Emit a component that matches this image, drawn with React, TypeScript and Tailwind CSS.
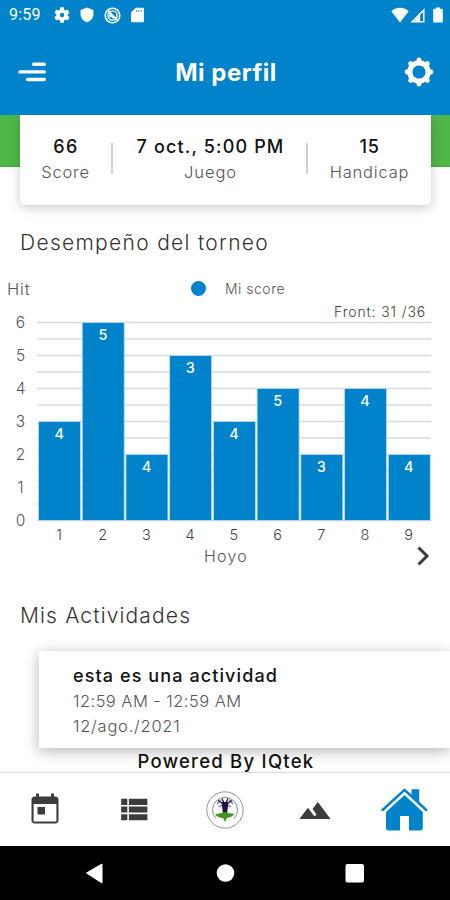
import React from 'react'

const holes = [
  { hole: 1, level: 3, hits: 4 },
  { hole: 2, level: 6, hits: 5 },
  { hole: 3, level: 2, hits: 4 },
  { hole: 4, level: 5, hits: 3 },
  { hole: 5, level: 3, hits: 4 },
  { hole: 6, level: 4, hits: 5 },
  { hole: 7, level: 2, hits: 3 },
  { hole: 8, level: 4, hits: 4 },
  { hole: 9, level: 2, hits: 4 },
]

const StatusBar = () => {
  return (
    <div className="h-[30px] flex items-center justify-between pl-[9px] pr-[7px]">
      <div className="flex items-center">
        <span className="font-['Roboto'] text-[16px] tracking-[0.2px] w-[45px]">9:59</span>
        {/* gear */}
        <svg className="w-4 h-4 mr-[10px]" viewBox="2 2 20 20" fill="currentColor">
          <path d="M19.14 12.94c.04-.3.06-.61.06-.94 0-.32-.02-.64-.07-.94l2.03-1.58a.49.49 0 0 0 .12-.61l-1.92-3.32a.49.49 0 0 0-.59-.22l-2.39.96c-.5-.38-1.03-.7-1.62-.94l-.36-2.54a.48.48 0 0 0-.48-.41h-3.84c-.24 0-.43.17-.47.41l-.36 2.54c-.59.24-1.13.57-1.62.94l-2.39-.96a.48.48 0 0 0-.59.22L2.74 8.87c-.12.21-.08.47.12.61l2.03 1.58c-.05.3-.09.63-.09.94s.02.64.07.94l-2.03 1.58a.49.49 0 0 0-.12.61l1.92 3.32c.12.22.37.29.59.22l2.39-.96c.5.38 1.03.7 1.62.94l.36 2.54c.05.24.24.41.48.41h3.84c.24 0 .44-.17.47-.41l.36-2.54c.59-.24 1.13-.56 1.62-.94l2.39.96c.22.08.47 0 .59-.22l1.92-3.32c.12-.22.07-.47-.12-.61l-2.01-1.58zM12 14.8a2.8 2.8 0 1 1 0-5.6 2.8 2.8 0 0 1 0 5.6z" />
        </svg>
        {/* shield */}
        <svg className="w-[14px] h-4 mr-[10px]" viewBox="0 0 14 16" fill="currentColor">
          <path d="M7 .5L.6 3v4.500c0 3.600 2.700 6.800 6.400 7.700 3.700-.9 6.400-4.100 6.400-7.700V3L7 .5z" />
        </svg>
        {/* crossed circle */}
        <svg className="w-[17px] h-[17px] mr-[10px]" viewBox="0 0 17 17" fill="none" stroke="currentColor">
          <circle cx="8.500" cy="8.500" r="7.300" strokeWidth="1.600" />
          <circle cx="8.500" cy="8.500" r="4.600" strokeWidth="1.300" />
          <path d="M4 3.500L13.500 13M6 10.500V7.500l4 4" strokeWidth="1.500" />
        </svg>
        {/* sd card */}
        <svg className="w-[13px] h-4" viewBox="0 0 13 16" fill="currentColor">
          <path fillRule="evenodd" d="M5 .8h6.600c.8 0 1.300.5 1.300 1.200v12c0 .8-.5 1.300-1.300 1.300H1.400C.6 15.300.1 14.800.1 14V5.200L5 .8zM5.200 3v2h.8V3h-.8zm2.300 0v2h.8V3h-.8zm2.300 0v2h.8V3h-.8z" />
        </svg>
      </div>
      <div className="flex items-center">
        {/* wifi */}
        <svg className="w-[18px] h-[16px]" viewBox="0 0 18 16" fill="currentColor">
          <path d="M9 15.500L.3 4.300C2.500 2 5.500.8 9 .8s6.500 1.200 8.700 3.500L9 15.500z" />
        </svg>
        {/* signal */}
        <svg className="w-[15px] h-[15px] ml-[1px] mr-[8px]" viewBox="0 0 15 15" fill="currentColor">
          <path fillRule="evenodd" d="M14.500.3v14.200H.3L14.500.3zM13 4v9h-2.800V6.800L13 4zM8.800 8.200V13H4l4.800-4.800z" />
          <path d="M5 12l4-4v5H5z" />
        </svg>
        {/* battery */}
        <svg className="w-[10px] h-4" viewBox="0 0 10 16" fill="currentColor">
          <path d="M3 .5h4v1.300h1.500c.8 0 1.300.5 1.300 1.200v11.500c0 .6-.4 1-1 1H1.200c-.6 0-1-.4-1-1V3c0-.7.5-1.200 1.300-1.200H3V.5z" />
        </svg>
      </div>
    </div>
  )
}

const Header = () => {
  return (
    <div className="h-[85px] flex items-center justify-between pl-[18px] pr-[16px]">
      <svg className="w-7 h-5 -mt-[2px]" viewBox="0 0 28 20" fill="none" stroke="currentColor" strokeWidth="3.400" strokeLinecap="round">
        <path d="M15.700 2.200H26.300M1.900 9.900H26.300M9.500 17.500H26.300" />
      </svg>
      <h1 className="text-[24px] leading-[26px] font-bold tracking-[0.5px] pl-[2px]">Mi perfil</h1>
      <svg className="w-[30px] h-[30px] -mt-[2px]" viewBox="-15 -15 30 30" fill="none" stroke="currentColor">
        <circle r="9.200" strokeWidth="5.200" />
        <path
          d="M0-11V-12M0 11V12M-11 0H-12M11 0H12M7.800-7.800l.6-.6M-7.800-7.800l-.6-.6M7.800 7.800l.6.6M-7.800 7.800l-.6.6"
          strokeWidth="4.800"
          strokeLinecap="round"
        />
      </svg>
    </div>
  )
}

const ScoreCard = () => {
  return (
    <div className="bg-linear-to-b from-[#4fb748] from-[51px] via-[#1fa52a] via-[52px] to-transparent to-[52px] px-5">
      <div className="h-[90px] w-[411px] bg-white rounded-b-[5px] shadow-[0_3px_12px_rgba(0,0,0,0.2)] flex pt-5 text-center">
        <div className="w-[91px]">
          <p className="text-[18px] leading-[23px] font-medium tracking-[1.4px] pl-[1px] text-[#111]">66</p>
          <p className="text-[16.5px] leading-[28px] font-light tracking-[0.8px] text-[#555]">Score</p>
        </div>
        <div className="w-[2px] h-[31px] mt-2 bg-[#d0d0d0]" />
        <div className="w-[193px] pl-[2px]">
          <p className="text-[18px] leading-[23px] font-medium tracking-[1.15px] text-[#111]">7 oct., 5:00 PM</p>
          <p className="text-[16.5px] leading-[28px] font-light tracking-[0.9px] text-[#555]">Juego</p>
        </div>
        <div className="w-[2px] h-[31px] mt-2 bg-[#d0d0d0]" />
        <div className="w-[123px]">
          <p className="text-[18px] leading-[23px] font-medium tracking-[0.6px] text-[#111]">15</p>
          <p className="text-[16.5px] leading-[28px] font-light tracking-[0.8px] text-[#555]">Handicap</p>
        </div>
      </div>
    </div>
  )
}

const ScoreChart = () => {
  return (
    <div>
      {/* legend */}
      <div className="h-5 -mt-[1px] flex items-center pl-[7px] text-[#555] font-light">
        <span className="w-[184px] pt-[3px] text-[16.5px] tracking-[0.9px]">Hit</span>
        <span className="w-[15px] h-[15px] rounded-full bg-[#0083ca]" />
        <span className="pl-[19px] text-[14px] tracking-[0.5px]">Mi score</span>
      </div>
      <p className="h-[21px] leading-[27px] pr-[24px] text-right text-[14px] font-light tracking-[0.85px] text-[#444]">Front: 31 /36</p>

      {/* bars */}
      <svg className="block w-[450px] h-[226px] overflow-visible" viewBox="0 319 450 226" fontWeight="300">
        {Array.from({ length: 13 }, (_, i) => (
          <path key={i} d={`M37 ${520.5 - i * 16.5}H431`} stroke="#dadada" strokeWidth="1.500" />
        ))}
        {[0, 1, 2, 3, 4, 5, 6].map((n) => (
          <text key={n} x="20.500" y={525.5 - n * 33} fontSize="15.500" textAnchor="middle" fill="#555">{n}</text>
        ))}
        {holes.map((h, i) => (
          <g key={h.hole} textAnchor="middle">
            <rect x={38.5 + i * 43.72} y={520.5 - h.level * 33} width="42" height={h.level * 33} fill="#0083ca" stroke="#bfdcf0" strokeWidth="0.800" />
            <text x={59.2 + i * 43.7} y={538 - h.level * 33} fontSize="14.500" fontWeight="500" fill="#fff">{h.hits}</text>
            <text x={59 + i * 43.7} y="540.300" fontSize="14.500" fill="#444">{h.hole}</text>
          </g>
        ))}
      </svg>

      <div className="h-[24px] flex items-center text-[#555]">
        <span className="w-[412px] pl-[40px] pb-[2px] text-center text-[16px] font-light tracking-[1.2px]">Hoyo</span>
        <svg className="w-[22px] h-[22px] -mt-[2px]" viewBox="0 0 22 22" fill="none" stroke="#3c3c3c" strokeWidth="3">
          <path d="M6.500 2.500L15 11l-8.500 8.500" />
        </svg>
      </div>
    </div>
  )
}

const BottomNav = () => {
  return (
    <div className="h-[74px] bg-white border-t border-[#dcdcdc] flex items-center text-[#3c3c3c] relative">
      <div className="w-[90px] flex justify-center">
        <svg className="w-9 h-9" viewBox="0 0 24 24" fill="currentColor">
          <path d="M19 3h-1V1h-2v2H8V1H6v2H5c-1.110 0-1.990.9-1.990 2L3 19c0 1.100.89 2 2 2h14c1.100 0 2-.9 2-2V5c0-1.100-.9-2-2-2zm1 16.600H4.400V8H19.600v11.600z" />
          <path d="M7 10h5v5H7z" />
        </svg>
      </div>
      <div className="w-[87px] flex justify-center">
        <svg className="w-[37px] h-[37px]" viewBox="0 0 24 24" fill="currentColor">
          <path d="M4 14h4v-4H4v4zm0 5h4v-4H4v4zM4 9h4V5H4v4zm5 5h12v-4H9v4zm0 5h12v-4H9v4zM9 5v4h12V5H9z" />
        </svg>
      </div>
      {/* club logo */}
      <div className="w-[96px] flex justify-center">
        <svg className="w-[38px] h-[38px]" viewBox="-19 -19 38 38">
          <circle r="18.200" fill="#fff" stroke="#777" strokeWidth="0.800" />
          <path d="M-9 8.500A12.500 12.500 0 1 1 9 8.500" fill="none" stroke="#8a8a98" strokeWidth="1" />
          <path d="M-8-6l4-4M8-6l-4-4M-6-3l3-2M6-3l-3-2" stroke="#9c98bb" strokeWidth="2" />
          <path d="M-7-9.500l5 3M7-9.500l-5 3M-3-11.500L-1-7M3-11.500L1-7" stroke="#1b1445" strokeWidth="1.300" />
          <path d="M-3.500-8h7L2 4h-4z" fill="#1b1445" />
          <path d="M-10 4.500C-6 3-3 3.500 0 2c3 1.500 6 1 9.500 2C7 7 4 7.500 2 8L0 12l-2-4C-5 8-8 7-10 4.500z" fill="#3f961d" />
        </svg>
      </div>
      <div className="w-[84px] flex justify-center">
        <svg className="w-[34px] h-[34px] translate-y-[0.5px]" viewBox="0 0 24 24" fill="currentColor">
          <path d="M14 6l-3.750 5 2.850 3.800-1.600 1.200C9.810 13.750 7 10 7 10l-6 8h22L14 6z" />
        </svg>
      </div>
      <div className="w-[93px] pl-[1px] flex justify-center">
        <svg className="w-[48px] h-[44px]" viewBox="0 0 48 44" fill="#0083ca">
          <path d="M2.600 22L24.500 1.800 46.300 22" fill="none" stroke="#fff" strokeWidth="6.400" strokeLinejoin="round" />
          <path d="M31.500 7V2.300c0-.6.4-1 1-1h5.700c.6 0 1 .4 1 1v13z" />
          <path d="M2.600 22L24.500 1.800 46.300 22" fill="none" stroke="#0083ca" strokeWidth="2.500" strokeLinecap="round" strokeLinejoin="round" />
          <path d="M6 24L24.500 7 42.800 24v16c0 1.500-1 2.500-2.500 2.500H29V28H20v14.500H8.500C7 42.500 6 41.500 6 40V24z" />
        </svg>
      </div>
    </div>
  )
}

const App = () => {
  return (
    <div className="w-[450px] h-[900px] bg-white overflow-hidden flex flex-col font-['Inter',sans-serif]">
      <div className="bg-[#0083ca] text-white relative">
        <StatusBar />
        <Header />
      </div>
      <ScoreCard />

      <h2 className="h-[74px] pt-[23px] pl-5 text-[21px] leading-[30px] font-light tracking-[1.3px] text-[#333]">Desempeño del torneo</h2>
      <ScoreChart />

      <h2 className="h-[82px] pt-[32px] pl-5 text-[21px] leading-[30px] font-light tracking-[1.15px] text-[#333]">Mis Actividades</h2>
      {/* activity card */}
      <div className="h-[97px] ml-[39px] pl-[34px] pt-3 bg-white shadow-[0_3px_14px_rgba(0,0,0,0.3)] text-[16.500px] leading-[25px] font-light text-[#555]">
        <p className="text-[18px] font-medium tracking-[1.1px] text-[#111]">esta es una actividad</p>
        <p className="tracking-[0.45px] pt-[1px]">12:59 AM - 12:59 AM</p>
        <p className="tracking-[0.75px]">12/ago./2021</p>
      </div>
      <p className="h-[24px] leading-[27px] pl-[2px] text-center text-[18.5px] font-medium tracking-[1.25px] text-[#111] relative">Powered By IQtek</p>

      <BottomNav />
      {/* system buttons */}
      <div className="flex-1 bg-black flex items-center">
        <svg className="w-[450px] h-[54px]" viewBox="0 846 450 54" fill="#fff">
          <path d="M86.500 873L102 864v19z" stroke="#fff" strokeWidth="1" strokeLinejoin="round" />
          <circle cx="225.500" cy="873" r="8.800" />
          <rect x="345.500" y="864" width="18.500" height="18.500" rx="2" />
        </svg>
      </div>
    </div>
  )
}

export default App
